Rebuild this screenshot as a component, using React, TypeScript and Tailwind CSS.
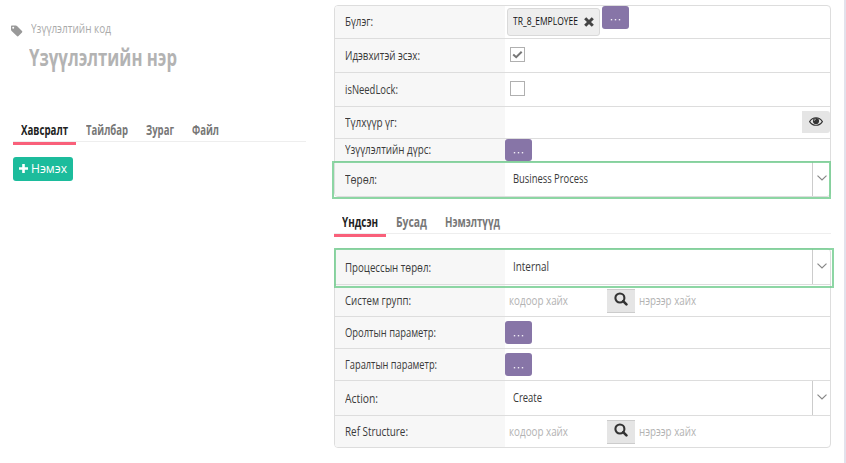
import { useLayoutEffect, useRef, useState } from 'react';
import type { ReactNode } from 'react';

// Condenses a line of text horizontally so that it fills the given width.
function Txt({ w, className = '', children }: { w: number; className?: string; children: ReactNode }) {
  const ref = useRef<HTMLSpanElement>(null);
  const [scale, setScale] = useState(0.8);
  useLayoutEffect(() => {
    if (ref.current && ref.current.offsetWidth) setScale(w / ref.current.getBoundingClientRect().width * scale);
  }, [w]);
  return (
    <span className="block shrink-0" style={{ width: w }}>
      <span
        ref={ref}
        className={`block w-max origin-left whitespace-nowrap ${className}`}
        style={{ transform: `scaleX(${scale})` }}
      >
        {children}
      </span>
    </span>
  );
}

function Row({ label, w, h, pt, children }: { label: string; w: number; h: string; pt: string; children?: ReactNode }) {
  return (
    <div className={`flex border-b border-[#dddddd] last:border-b-0 ${h}`}>
      <div className={`w-[170px] shrink-0 bg-[#f7f7f7] pl-[10px] ${pt}`}>
        <Txt w={w} className="text-[13.5px] leading-5 text-[#3a3a3a]">{label}</Txt>
      </div>
      <div className="flex min-w-0 flex-1 items-start">{children}</div>
    </div>
  );
}

function Dots({ className = '' }: { className?: string }) {
  return (
    <button className={`flex w-[27px] shrink-0 justify-center rounded-[3px] bg-[#8775a7] text-white ${className}`}>
      <svg width="11" height="2" viewBox="0 0 11 2" fill="#f0edf5">
        <rect x="0.8" width="1.4" height="1.4" />
        <rect x="4.8" width="1.4" height="1.4" />
        <rect x="8.8" width="1.4" height="1.4" />
      </svg>
    </button>
  );
}

function Select({ value, w, pt, arrow }: { value: string; w: number; pt: string; arrow: string }) {
  return (
    <div className="flex h-full flex-1">
      <div className={`flex-1 pl-2 ${pt}`}>
        <Txt w={w} className="text-[13.5px] leading-5 text-[#3a3a3a]">{value}</Txt>
      </div>
      <div className={`w-[18px] border-l border-[#cccccc] pl-[4px] ${arrow}`}>
        <svg width="10" height="6" viewBox="0 0 10 6" fill="none" stroke="#888" strokeWidth="1.2">
          <path d="M0.5 0.6 5 5 9.5 0.6" />
        </svg>
      </div>
    </div>
  );
}

function Lookup() {
  return (
    <>
      <div className="w-[102px] pl-1 pt-[5px]">
        <Txt w={59} className="text-[13.5px] leading-5 text-[#b3b3b3]">кодоор хайх</Txt>
      </div>
      <button className="mt-1 flex h-6 w-7 justify-center border-y border-[#cccccc] bg-[#e5e5e5] pt-[2px]">
        <svg width="14" height="14" viewBox="0 0 14 14" fill="none" stroke="#333">
          <circle cx="5.9" cy="6" r="4.5" strokeWidth="2.1" />
          <path d="M9.2 9.2 12.4 12.4" strokeWidth="2.6" strokeLinecap="round" />
        </svg>
      </button>
      <div className="pl-1 pt-[5px]">
        <Txt w={57} className="text-[13.5px] leading-5 text-[#b3b3b3]">нэрээр хайх</Txt>
      </div>
    </>
  );
}

function Check({ on }: { on?: boolean }) {
  return (
    <span className="ml-[5px] mt-2 flex size-[15px] items-center justify-center border border-[#b0b0b0] bg-white">
      {on && (
        <svg width="11" height="9" viewBox="0 0 11 9" fill="none" stroke="#777" strokeWidth="2">
          <path d="M1.2 4.4 4.2 7.2 9.7 1.7" />
        </svg>
      )}
    </span>
  );
}

function Tab({ label, w, active }: { label: string; w: number; active?: boolean }) {
  return (
    <div className={`h-[25px] shrink-0 border-b-[3px] ${active ? 'border-[#f9607a] pl-2 pr-2 text-[#222]' : 'border-transparent pl-[10px] pr-2 text-[#777]'}`}>
      <Txt w={w} className="text-[13.5px] font-bold leading-5">{label}</Txt>
    </div>
  );
}

export default function App() {
  return (
    <div className="flex h-[463px] w-[846px] overflow-hidden border-r-2 border-[#e2e2ec] bg-white font-['Open_Sans','Noto_Sans',sans-serif]">
      <aside className="w-[334px] shrink-0 pl-[11px]">
        <div className="flex h-[38px] pt-[18px]">
          <svg width="12" height="12" viewBox="0 0 12 12" className="mt-[7px]" fill="#999">
            <path fillRule="evenodd" d="M0 1.4Q0 .6 .8 .6H4.8Q5.5 .6 6 1.1L11 6Q11.7 6.7 11 7.4L7.2 11.2Q6.6 11.7 5.9 11.1L.6 5.9Q0 5.3 0 4.7ZM2.2 1.7A1 1 0 1 0 2.2 3.7A1 1 0 1 0 2.2 1.7Z" />
          </svg>
          <div className="pl-2">
            <Txt w={80} className="text-[13.5px] leading-5 text-[#aaa]">Үзүүлэлтийн код</Txt>
          </div>
        </div>
        <div className="pl-[18px] pt-[3px]">
          <Txt w={148} className="text-[23px] font-bold leading-[32px] text-[#b3b3b3]">Үзүүлэлтийн нэр</Txt>
        </div>
        <div className="ml-0.5 mt-[47px] flex h-[22px] w-[293px] border-b border-[#eeeeee]">
          <Tab label="Хавсралт" w={47} active />
          <Tab label="Тайлбар" w={42} />
          <Tab label="Зураг" w={28} />
          <Tab label="Файл" w={27} />
        </div>
        <button className="ml-0.5 mt-[15px] flex h-6 w-[60px] rounded-[3px] bg-[#1cbc9c] pl-1.5 text-white">
          <svg width="9" height="9" viewBox="0 0 9 9" className="mt-[7px]" stroke="#fff" strokeWidth="2.6">
            <path d="M4.5 0v9M0 4.5h9" />
          </svg>
          <span className="pl-[3px] pt-[1px]">
            <Txt w={36} className="text-left text-[13.5px] leading-5">Нэмэх</Txt>
          </span>
        </button>
      </aside>

      <main className="w-[500px] shrink-0 pt-[5px]">
        <section className="relative w-[497px]">
          <div className="overflow-hidden rounded border border-[#dddddd]">
            <Row label="Бүлэг:" w={28} h="h-[33px]" pt="pt-[5px]">
              <div className="ml-0.5 mt-0.5 flex h-[28px] w-[93px] rounded-[3px] border border-[#d9d9d9] bg-[#eeeeee] pl-[5px] pt-[3px]">
                <Txt w={65} className="text-[11.5px] leading-[18px] text-[#111]">TR_8_EMPLOYEE</Txt>
                <svg width="10" height="10" viewBox="0 0 10 10" className="ml-[6px] mt-[5px]" stroke="#444" strokeWidth="3">
                  <path d="M1.2 1.2 8.8 8.8M8.8 1.2 1.2 8.8" />
                </svg>
              </div>
              <Dots className="ml-0.5 h-[23px] pt-[13px]" />
            </Row>
            <Row label="Идэвхитэй эсэх:" w={75} h="h-[34px]" pt="pt-[6px]"><Check on /></Row>
            <Row label="isNeedLock:" w={53} h="h-[34px]" pt="pt-[6px]"><Check /></Row>
            <Row label="Түлхүүр үг:" w={52} h="h-[32px]" pt="pt-[5px]">
              <button className="ml-auto mt-1 flex h-[22px] w-7 items-center justify-center rounded-r-[3px] bg-[#e5e5e5]">
                <svg width="14" height="9" viewBox="0 0 14 9" className="-mt-px">
                  <path d="M.6 4.6Q3 .7 7 .7T13.4 4.6Q11 8.3 7 8.3T.6 4.6Z" fill="none" stroke="#333" strokeWidth="1.1" />
                  <circle cx="7" cy="4" r="3.1" fill="#333" />
                  <path d="M5.2 3.8Q5.3 2.3 6.8 2.2" fill="none" stroke="#ddd" strokeWidth=".7" />
                </svg>
              </button>
            </Row>
            <Row label="Үзүүлэлтийн дүрс:" w={86} h="h-[23px]" pt="pt-0"><Dots className="h-[22px] pt-[13px]" /></Row>
            <Row label="Төрөл:" w={32} h="h-[34px]" pt="pt-[7px]"><Select value="Business Process" w={75} pt="pt-[6px]" arrow="pt-[13px]" /></Row>
          </div>
          <div className="pointer-events-none absolute -left-0.5 top-[156px] h-[38px] w-[499px] border-2 border-[#70cc8d]/80" />
        </section>

        <div className="mt-[15px] flex h-[22px] w-[497px] border-b border-[#eeeeee]">
          <Tab label="Үндсэн" w={36} active />
          <Tab label="Бусад" w={31} />
          <Tab label="Нэмэлтүүд" w={55} />
        </div>

        <section className="relative mt-[14px] w-[497px]">
          <div className="overflow-hidden rounded border border-[#dddddd]">
            <Row label="Процессын төрөл:" w={86} h="h-[36px]" pt="pt-[8px]"><Select value="Internal" w={36} pt="pt-[7px]" arrow="pt-[14px]" /></Row>
            <Row label="Систем групп:" w={66} h="h-[32px]" pt="pt-[5px]"><Lookup /></Row>
            <Row label="Оролтын параметр:" w={91} h="h-[32px]" pt="pt-[5px]"><Dots className="mt-1 h-[23px] pt-[14px]" /></Row>
            <Row label="Гаралтын параметр:" w={92} h="h-[32px]" pt="pt-[5px]"><Dots className="mt-1 h-[23px] pt-[14px]" /></Row>
            <Row label="Action:" w={33} h="h-[35px]" pt="pt-[7px]"><Select value="Create" w={29} pt="pt-[6px]" arrow="pt-[13px]" /></Row>
            <Row label="Ref Structure:" w={63} h="h-[31px]" pt="pt-[5px]"><Lookup /></Row>
          </div>
          <div className="pointer-events-none absolute left-0 top-0 h-10 w-[500px] border-2 border-[#70cc8d]/80" />
        </section>
      </main>
    </div>
  );
}
